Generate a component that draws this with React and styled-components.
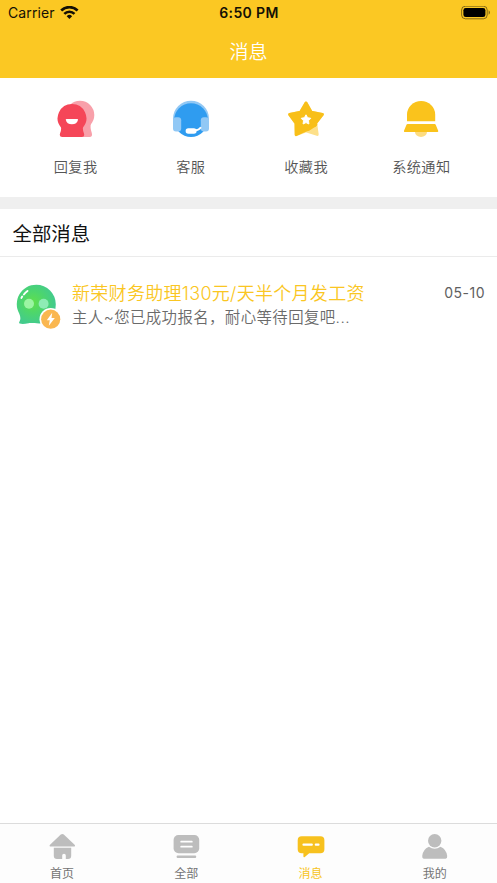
import React, { useState } from 'react';
import styled, { createGlobalStyle } from 'styled-components';

const GlobalStyle = createGlobalStyle`
  * {
    box-sizing: border-box;
  }

  body {
    margin: 0;
    background: #fff;
    font-family: Inter, 'Noto Sans CJK SC', sans-serif;
  }
`

const Page = styled.div`
  display: flex;
  flex-direction: column;
  height: 100vh;
  overflow: hidden;
`

const Header = styled.header`
  height: 77.5px;
  background: #fbc823;
`

const StatusBar = styled.div`
  display: grid;
  grid-template-columns: 1fr auto 1fr;
  align-items: center;
  height: 26px;
  padding: 0 7px 0 8px;
  font-size: 14px;
  line-height: 26px;
  color: #141005;
`

const Carrier = styled.div`
  display: flex;
  align-items: center;
  gap: 5px;
  letter-spacing: 0.1px;
`

const Clock = styled.div`
  font-size: 14px;
  font-weight: 600;
  letter-spacing: 0.35px;
`

const Battery = styled.svg`
  justify-self: end;
`

const Title = styled.h1`
  margin: 0;
  font-size: 19px;
  font-weight: 350;
  line-height: 53px;
  text-align: center;
  color: #fff;
`

const Shortcuts = styled.nav`
  display: flex;
  height: 119px;
  padding: 21.5px 18px 0;
`

const Shortcut = styled.a`
  flex: 1;
  display: flex;
  flex-direction: column;
  align-items: center;
  gap: 18px;
  font-size: 14.2px;
  font-weight: 350;
  line-height: 20px;
  letter-spacing: 0.4px;
  color: #555;
`

const SectionTitle = styled.h2`
  height: 60px;
  margin: 0;
  padding-left: 12.5px;
  border-top: 12px solid #efefef;
  border-bottom: 1px solid #ebebeb;
  font-size: 19.4px;
  font-weight: 400;
  line-height: 50px;
  color: #111;
`

const MessageList = styled.main`
  flex: 1;
`

const MessageRow = styled.div`
  display: flex;
  padding: 26px 12px 0 14.5px;
`

const MessageBody = styled.div`
  flex: 1;
  padding-left: 9.5px;
  white-space: nowrap;
`

const MessageTitle = styled.div`
  font-size: 18px;
  font-weight: 350;
  line-height: 22px;
  letter-spacing: 0.3px;
  color: #fac622;
`

const MessageText = styled.div`
  font-size: 15.4px;
  font-weight: 350;
  line-height: 26px;
  letter-spacing: 0.43px;
  color: #6a6a6a;
`

const MessageDate = styled.time`
  font-size: 14px;
  line-height: 20px;
  letter-spacing: 0.5px;
  color: #606060;
`

const TabBar = styled.footer`
  display: flex;
  height: 60px;
  padding-top: 9px;
  border-top: 1px solid #dcdcdc;
  background: #fdfdfd;
`

const Tab = styled.button`
  flex: 1;
  display: flex;
  flex-direction: column;
  align-items: center;
  gap: 5px;
  padding: 0;
  border: 0;
  background: none;
  font-family: inherit;
  font-size: 12px;
  line-height: 17px;
  color: ${props => props.$active ? '#f7c321' : '#747474'};

  svg {
    color: ${props => props.$active ? '#f7c11e' : '#bdbdbd'};
  }
`

const WifiIcon = () => (
  <svg width="20" height="15" viewBox="0.6 0.9 20 15" fill="none" stroke="#141005" strokeWidth="2.6">
    <path d="M1.8 5.4a11.6 11.6 0 0 1 16.4 0" />
    <path d="M4.9 8.7a7.2 7.2 0 0 1 10.2 0" />
    <path d="M7.3 11.1a3.8 3.8 0 0 1 5.4 0L10 13.9z" fill="#141005" stroke="none" />
  </svg>
)

const BatteryIcon = () => (
  <Battery width="29" height="14" viewBox="0 0.4 29 14">
    <rect x="0.6" y="0.6" width="25.6" height="12.6" rx="3.8" fill="none" stroke="#141005" strokeOpacity="0.5" />
    <rect x="2.4" y="2.4" width="22" height="9" rx="2.3" fill="#000" />
    <path d="M27.6 4.7q1.4.8 1.4 2.2t-1.4 2.2z" fill="#141005" fillOpacity="0.5" />
  </Battery>
)

const ReplyIcon = () => (
  <svg width="40" height="40" viewBox="1 0 40 40">
    <circle cx="25" cy="16" r="14.3" fill="#f8a0aa" />
    <path d="M17 20L36 24.5q-1.2 3.500 .8 9.500 1 4-2.200 4H17z" fill="#f8a0aa" />
    <path d="M17 5A14.3 14.3 0 0 1 28 28.500q-.5 2.500 1 6 .9 3.500-2.200 3.500H7.200q-3.100 0-2.200-3.500 1.500-3.500 1-6A14.300 14.300 0 0 1 17 5z" fill="#f54658" />
    <path d="M11.500 20h10.800q.8 0 .7.800a6.200 5.500 0 0 1-12.200 0q-.1-.8.7-.8z" fill="#fff" />
  </svg>
)

const ServiceIcon = () => (
  <svg width="40" height="40" viewBox="0 0 40 40">
    <path d="M2 21V19.7a18 18 0 0 1 36 0V21z" fill="#91c8f5" />
    <circle cx="20" cy="21.1" r="16.9" fill="#2f9cf0" />
    <rect x="2" y="18.2" width="8.2" height="14.4" rx="3" fill="#91c8f5" />
    <rect x="29.8" y="18.2" width="8.2" height="14.4" rx="3" fill="#91c8f5" />
    <path d="M24 31.4q4-.4 6-3.2" fill="none" stroke="#fff" strokeWidth="1.8" />
    <rect x="14.6" y="29.3" width="11" height="5.4" rx="2.7" fill="#fff" />
  </svg>
)

const STAR = 'M20 4L25.2 13.2L36.4 15.4L29.6 24L31.2 35.400L20 31.8L10.2 35.6L10 24.2L3.6 15.4L14.6 13.2Z'

const StarIcon = () => (
  <svg width="40" height="40" viewBox="0 0 40 40">
    <clipPath id="star-main">
      <path d="M0 0H40V15Q33 29 17 34L9 38H0z" />
    </clipPath>
    <path d={STAR} fill="#fde08a" stroke="#fde08a" strokeWidth="3" strokeLinejoin="round" />
    <path d={STAR} fill="#f8bf19" stroke="#f8bf19" strokeWidth="3" strokeLinejoin="round" clipPath="url(#star-main)" />
    <path d="M20 15.8l1.6 2.9 3.2.6-2.3 2.4.4 3.3-2.9-1.4-2.9 1.4.4-3.3-2.3-2.4 3.2-.6z" fill="#fff" stroke="#fff" strokeLinejoin="round" />
  </svg>
)

const BellIcon = () => (
  <svg width="40" height="40" viewBox="0 0 40 40">
    <path d="M14 33h12a6 5 0 0 1-12 0z" fill="#fddc80" />
    <path d="M6 22.3V15.5a14.1 13.5 0 0 1 28.2 0v6.8z" fill="#fac31c" />
    <path d="M6.6 25h27q.7 0 1 .6l2.6 6.2q.4 1.2-.8 1.2H3.8q-1.2 0-.8-1.2l2.6-6.2q.3-.6 1-.6z" fill="#fac31c" />
  </svg>
)

const Avatar = () => (
  <svg width="48" height="48" viewBox="0 0 48 48">
    <defs>
      <radialGradient id="avatar-fill" cx="0.42" cy="0.45" r="0.55">
        <stop offset="0" stopColor="#60df4c" />
        <stop offset="0.5" stopColor="#4dd66c" />
        <stop offset="1" stopColor="#43cb8c" />
      </radialGradient>
    </defs>
    <path d="M21.3 1.7A19.5 19.5 0 0 1 40.8 21.2C40.8 33 33 40.4 25 40.5 20 40.6 17 39.8 13.5 40.2 9.8 41 7 41.2 4.8 40.6 3.8 40.2 4 39.5 4.4 38.8 6 36 5.4 33.6 4.3 30.8A19.5 19.5 0 0 1 21.3 1.7z" fill="url(#avatar-fill)" />
    <circle cx="14" cy="20.7" r="5" fill="#9bf5a3" />
    <circle cx="28.6" cy="20.7" r="5" fill="#8eecb5" />
    <path d="M6.4 14.9l.8-1.4M8.9 11.5q1.5-2 3.6-3.6" stroke="#fff" strokeWidth="1.9" strokeLinecap="round" fill="none" />
    <circle cx="35.7" cy="36.2" r="11.2" fill="#fff" />
    <circle cx="35.7" cy="36.2" r="9.6" fill="#fab750" />
    <path d="M37.2 29.8l-5.4 7.4h3l-1 5.6 6-7.7h-3.3z" fill="#fff" />
  </svg>
)

const HomeIcon = () => (
  <svg width="30" height="27" viewBox="0 0 30 27" fill="currentColor">
    <path d="M13.8 1.6q1.5-1.2 3 0l10.8 10.1q1.2 1.8-.8 1.8H3.8q-2 0-.8-1.8z" />
    <path d="M6.8 14.8h17.4v8q0 3.2-3.2 3.2h-2.2v-3.6q0-1.6-1.8-1.6t-1.8 1.6V26H10q-3.2 0-3.2-3.2z" />
  </svg>
)

const AllIcon = () => (
  <svg width="30" height="27" viewBox="0 0 30 27" fill="currentColor">
    <rect x="2.6" y="2" width="25.6" height="18.2" rx="4.8" />
    <path d="M10.2 8.7h10.6M10.2 13.7h10.6" stroke="#fff" strokeWidth="1.8" strokeLinecap="round" />
    <rect x="5.6" y="22.6" width="19.6" height="2.3" rx="1" />
  </svg>
)

const MessageIcon = () => (
  <svg width="30" height="27" viewBox="0 0 30 27" fill="currentColor">
    <path d="M5.7 3.3h18.7q4 0 4 4v9q0 4-4 4H13.2l-4.4 3.8q-1.4.8-1.4-.8v-3H5.7q-4 0-4-4v-9q0-4 4-4z" />
    <path d="M7.5 11.7h8.3M19.8 11.7h2.7" stroke="#fff" strokeWidth="2.2" strokeLinecap="round" />
  </svg>
)

const ProfileIcon = () => (
  <svg width="30" height="27" viewBox="0 0 30 27" fill="currentColor">
    <circle cx="14.7" cy="7.8" r="6.7" />
    <path d="M8.9 13.7q5.8 4.2 11.6 0Q26.6 16.4 27.2 23q.2 2.7-1.6 2.7H3.8Q2 25.7 2.2 23 2.8 16.4 8.9 13.7z" />
  </svg>
)

const shortcuts = [
  { label: '回复我', Icon: ReplyIcon },
  { label: '客服', Icon: ServiceIcon },
  { label: '收藏我', Icon: StarIcon },
  { label: '系统通知', Icon: BellIcon },
]

const messages = [
  {
    title: '新荣财务助理130元/天半个月发工资',
    text: '主人~您已成功报名，耐心等待回复吧...',
    date: '05-10',
  },
]

const tabs = [
  { label: '首页', Icon: HomeIcon },
  { label: '全部', Icon: AllIcon },
  { label: '消息', Icon: MessageIcon },
  { label: '我的', Icon: ProfileIcon },
]

function App() {
  const [activeTab, setActiveTab] = useState('消息');

  return (
    <Page>
      <GlobalStyle />
      <Header>
        <StatusBar>
          <Carrier>
            Carrier
            <WifiIcon />
          </Carrier>
          <Clock>6:50 PM</Clock>
          <BatteryIcon />
        </StatusBar>
        <Title>消息</Title>
      </Header>
      <Shortcuts>
        {shortcuts.map(({ label, Icon }) => (
          <Shortcut key={label}>
            <Icon />
            {label}
          </Shortcut>
        ))}
      </Shortcuts>
      <SectionTitle>全部消息</SectionTitle>
      <MessageList>
        {messages.map(message => (
          <MessageRow key={message.title}>
            <Avatar />
            <MessageBody>
              <MessageTitle>{message.title}</MessageTitle>
              <MessageText>{message.text}</MessageText>
            </MessageBody>
            <MessageDate>{message.date}</MessageDate>
          </MessageRow>
        ))}
      </MessageList>
      <TabBar>
        {tabs.map(({ label, Icon }) => (
          <Tab key={label} $active={label === activeTab} onClick={() => setActiveTab(label)}>
            <Icon />
            {label}
          </Tab>
        ))}
      </TabBar>
    </Page>
  );
}

export default App;
